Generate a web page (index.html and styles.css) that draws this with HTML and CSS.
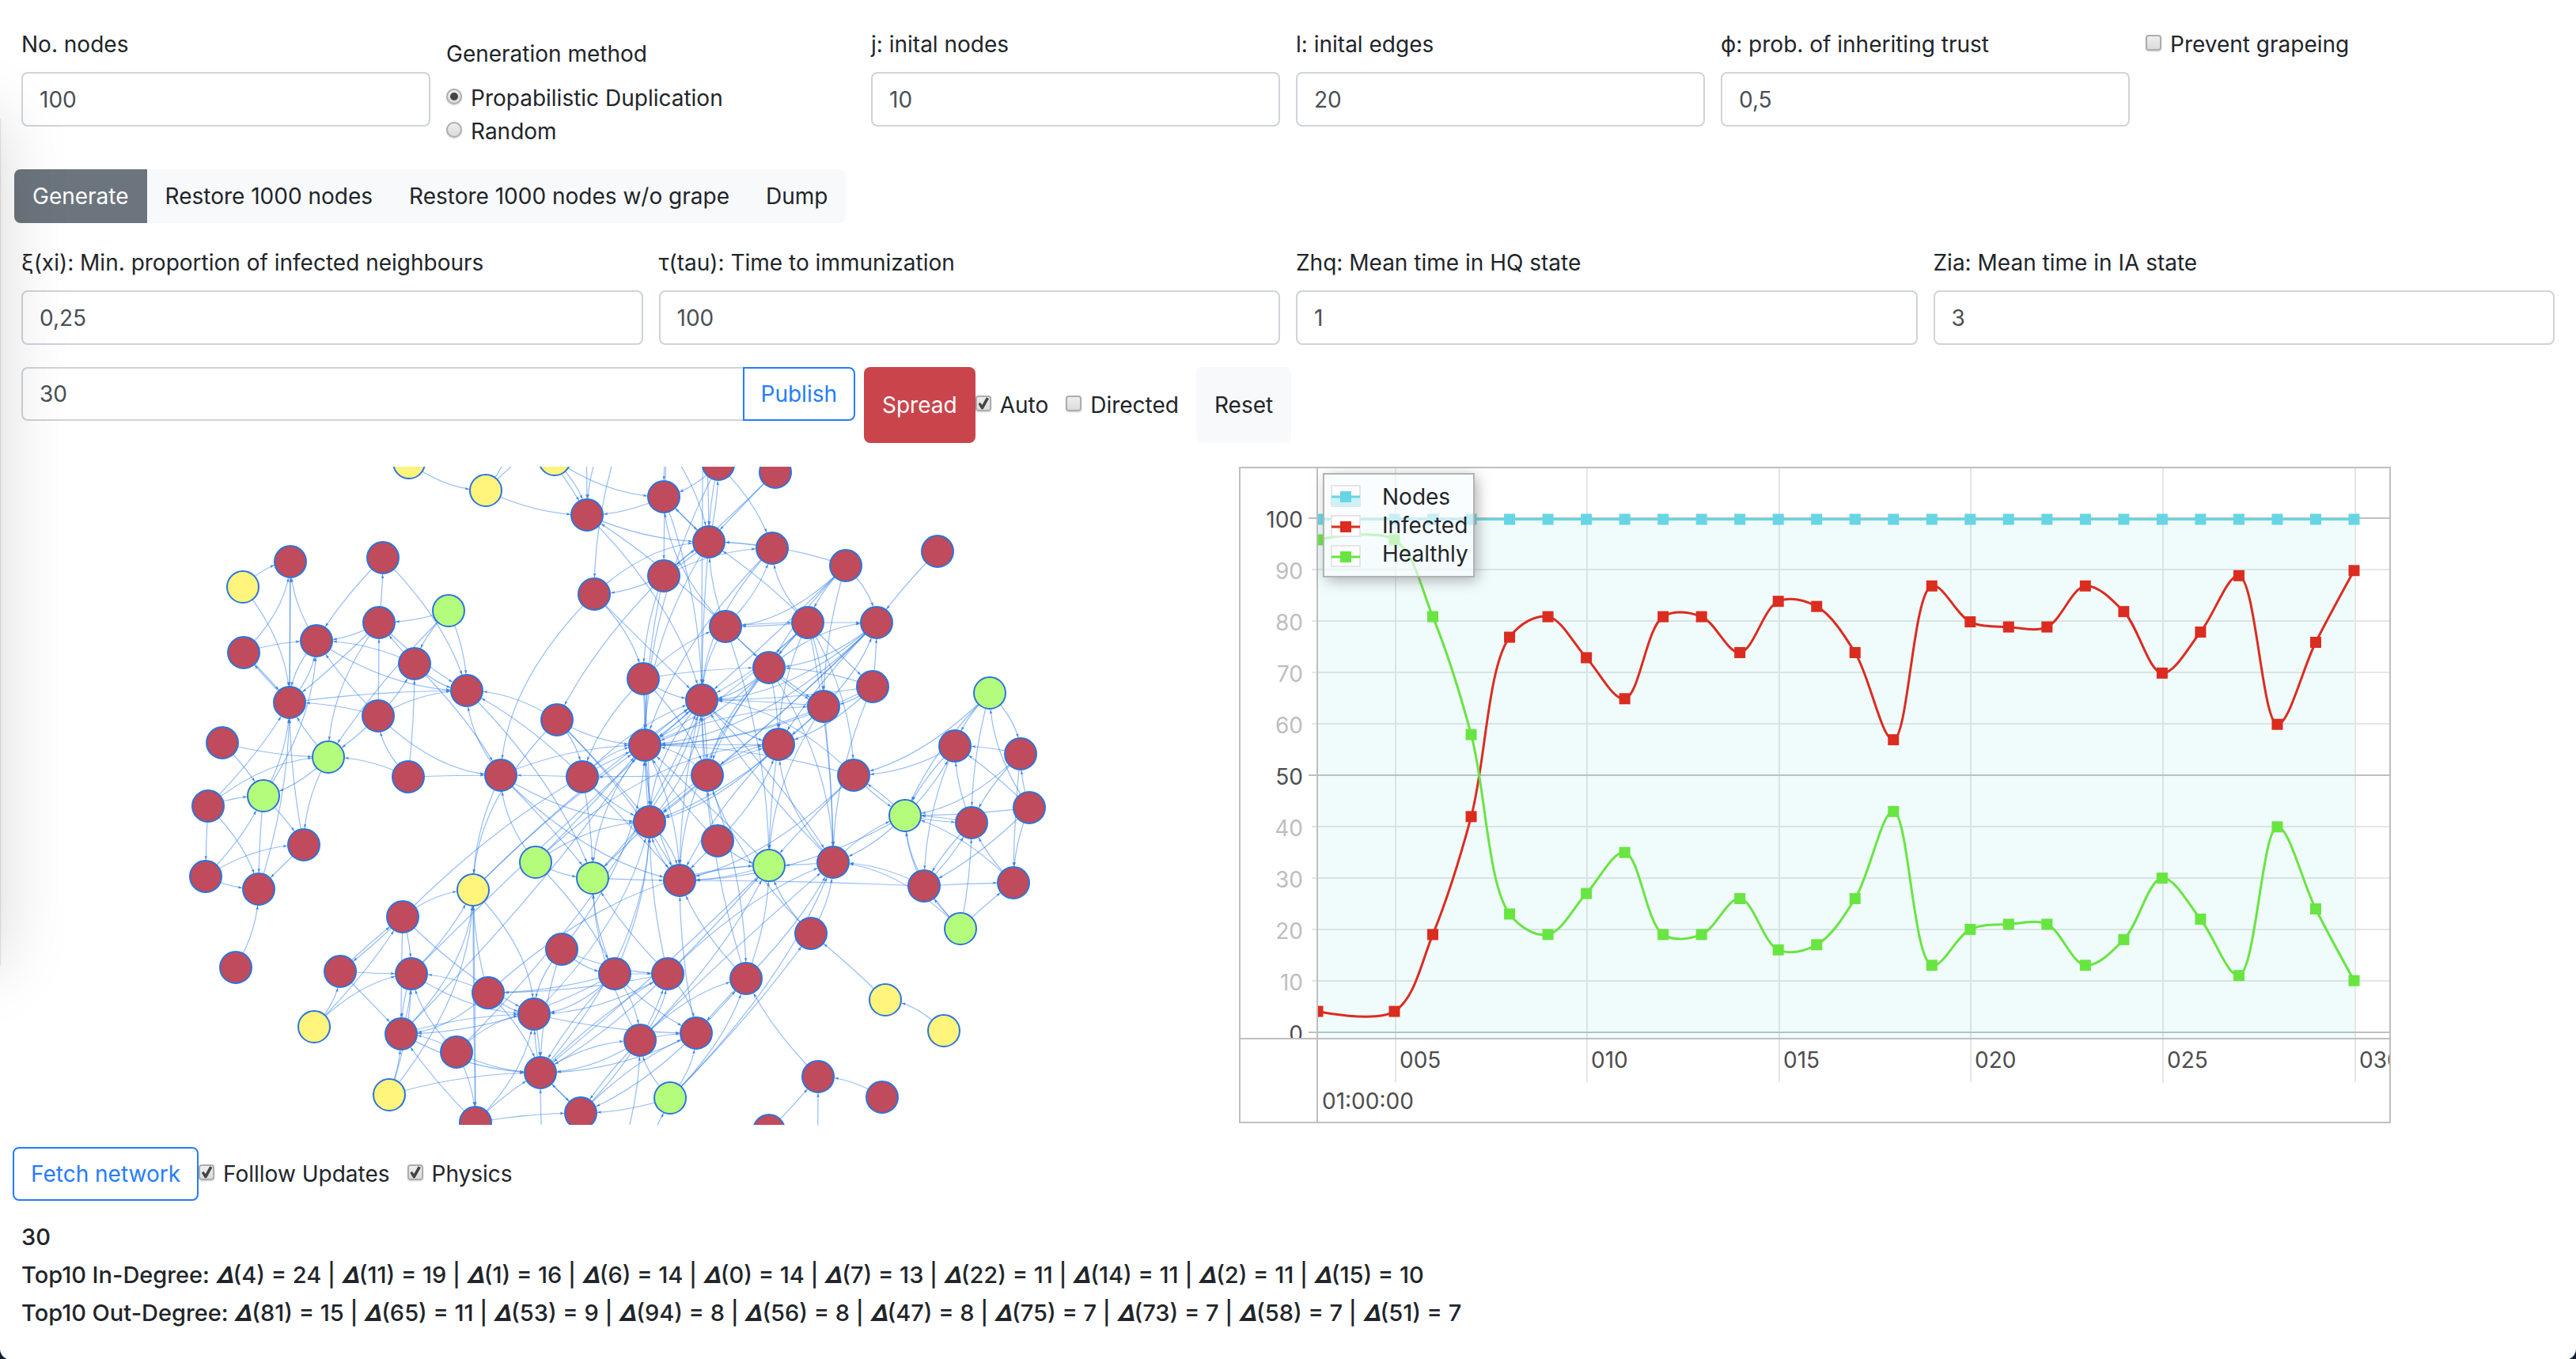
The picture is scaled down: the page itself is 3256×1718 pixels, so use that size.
FILE: index.html
```html
<!DOCTYPE html>
<html lang="en">
<head>
<meta charset="utf-8">
<meta name="viewport" content="width=device-width, initial-scale=1">
<title>Trust network</title>
<link rel="stylesheet" href="styles.css">
</head>
<body>
<main class="window">
  <form class="form-grid six" onsubmit="return false">
    <div class="field">
      <label for="nodes">No. nodes</label>
      <input class="control" id="nodes" type="text" value="100">
    </div>
    <fieldset class="methods">
      <legend>Generation method</legend>
      <label class="choice"><input type="radio" name="method" checked> Propabilistic Duplication</label>
      <label class="choice"><input type="radio" name="method"> Random</label>
    </fieldset>
    <div class="field">
      <label for="j">j: inital nodes</label>
      <input class="control" id="j" type="text" value="10">
    </div>
    <div class="field">
      <label for="l">l: inital edges</label>
      <input class="control" id="l" type="text" value="20">
    </div>
    <div class="field">
      <label for="phi">ϕ: prob. of inheriting trust</label>
      <input class="control" id="phi" type="text" value="0,5">
    </div>
    <div class="field">
      <label class="choice"><input type="checkbox"> Prevent grapeing</label>
    </div>
  </form>

  <div class="btn-group">
    <button class="btn btn-secondary" type="button">Generate</button>
    <button class="btn btn-light" type="button">Restore 1000 nodes</button>
    <button class="btn btn-light" type="button">Restore 1000 nodes w/o grape</button>
    <button class="btn btn-light" type="button">Dump</button>
  </div>

  <form class="form-grid four" onsubmit="return false">
    <div class="field">
      <label for="xi">ξ(xi): Min. proportion of infected neighbours</label>
      <input class="control" id="xi" type="text" value="0,25">
    </div>
    <div class="field">
      <label for="tau">τ(tau): Time to immunization</label>
      <input class="control" id="tau" type="text" value="100">
    </div>
    <div class="field">
      <label for="zhq">Zhq: Mean time in HQ state</label>
      <input class="control" id="zhq" type="text" value="1">
    </div>
    <div class="field">
      <label for="zia">Zia: Mean time in IA state</label>
      <input class="control" id="zia" type="text" value="3">
    </div>
  </form>

  <div class="actions">
    <div class="publish">
      <input class="control" type="text" value="30" aria-label="Message">
      <button class="btn btn-outline" type="button">Publish</button>
    </div>
    <div class="spread">
      <button class="btn btn-danger" type="button">Spread</button>
      <label class="choice"><input type="checkbox" checked> Auto</label>
      <label class="choice"><input type="checkbox"> Directed</label>
      <button class="btn btn-light" type="button">Reset</button>
    </div>
  </div>

  <section class="views">
    <svg id="network" class="view" viewBox="0 590 1566 832" role="img" aria-label="Network"></svg>
    <svg id="chart" class="view" viewBox="1566 590 1456 832" role="img" aria-label="Infection history"></svg>
  </section>

  <div class="network-tools">
    <button class="btn btn-outline" type="button">Fetch network</button>
    <label class="choice"><input type="checkbox" checked> Folllow Updates</label>
    <label class="choice"><input type="checkbox" checked> Physics</label>
  </div>

  <section class="stats">
    <h6>30</h6>
    <h6>Top10 In-Degree: 𝜟(4) = 24 | 𝜟(11) = 19 | 𝜟(1) = 16 | 𝜟(6) = 14 | 𝜟(0) = 14 | 𝜟(7) = 13 | 𝜟(22) = 11 | 𝜟(14) = 11 | 𝜟(2) = 11 | 𝜟(15) = 10</h6>
    <h6>Top10 Out-Degree: 𝜟(81) = 15 | 𝜟(65) = 11 | 𝜟(53) = 9 | 𝜟(94) = 8 | 𝜟(56) = 8 | 𝜟(47) = 8 | 𝜟(75) = 7 | 𝜟(73) = 7 | 𝜟(58) = 7 | 𝜟(51) = 7</h6>
  </section>
</main>
<script src="script.js"></script>
</body>
</html>
```
FILE: styles.css
```css
*,
*::before,
*::after {
  box-sizing: border-box;
}

html {
  background: #12202f;
}

body {
  margin: 0;
  color: #212529;
  font-family: Inter, "Liberation Sans", sans-serif;
  font-size: 28px;
  line-height: 42px;
}

.window {
  position: relative;
  min-height: 100vh;
  padding: 35px 0 28px;
  overflow: hidden;
  background: #fff;
  border-radius: 0 0 14px 14px;
}

/* Shadow cast by the neighbouring window */
.window::after {
  content: "";
  position: absolute;
  top: 150px;
  left: -200px;
  width: 200px;
  height: 1070px;
  box-shadow: 0 0 2px rgba(0, 0, 0, 0.3), 0 0 90px rgba(0, 0, 0, 0.16);
  pointer-events: none;
}

input,
button {
  margin: 0;
  font: inherit;
}

.form-grid {
  display: grid;
  gap: 20px;
  align-items: start;
  padding: 0 27px;
}

.six {
  grid-template-columns: repeat(6, minmax(0, 1fr));
}

.four {
  grid-template-columns: repeat(4, minmax(0, 1fr));
}

.field {
  display: flex;
  flex-direction: column;
  gap: 14px;
}

.control {
  width: 100%;
  height: 69px;
  padding: 0 21px;
  color: #495057;
  background: #fff;
  border: 2px solid #ced4da;
  border-radius: 8px;
}

.methods {
  min-width: 0;
  margin: 0;
  padding: 12px 0 0;
  border: 0;
}

.methods legend {
  float: left;
  width: 100%;
  margin-bottom: 14px;
  padding: 0;
}

.methods .choice {
  clear: both;
}

.choice {
  display: flex;
  align-items: center;
  gap: 11px;
}

.choice input {
  position: relative;
  flex: none;
  width: 20px;
  height: 20px;
  margin-bottom: 4px;
  appearance: none;
  background: linear-gradient(#eee, #dcdcdc);
  border: 2px solid #adadad;
  border-radius: 4px;
  box-shadow: 0 1px 2px rgba(0, 0, 0, 0.2);
}

.choice input[type="radio"] {
  border-radius: 50%;
}

.choice input:checked::before {
  content: "";
  position: absolute;
  inset: 0;
  background: #444;
  clip-path: polygon(12% 54%, 26% 42%, 42% 62%, 76% 2%, 96% 12%, 50% 96%, 36% 96%);
}

.choice input[type="radio"]:checked::before {
  inset: 3px;
  border-radius: 50%;
  clip-path: none;
}

.btn {
  padding: 11px 21px;
  color: #212529;
  white-space: nowrap;
  background: transparent;
  border: 2px solid transparent;
  border-radius: 8px;
}

.btn-group {
  display: flex;
  margin: 27px 18px 29px;
}

.btn-group .btn {
  border-radius: 0;
}

.btn-group .btn:first-child {
  border-radius: 8px 0 0 8px;
}

.btn-group .btn:last-child {
  border-radius: 0 8px 8px 0;
}

.btn-group .btn-secondary,
.btn-danger {
  color: #fff;
}

.btn-secondary {
  background: #6c757d;
}

.btn-light {
  background: #f8f9fa;
}

.btn-danger {
  background: #ca444b;
}

.btn-outline {
  color: #257cff;
  border-color: #257cff;
}

.actions {
  display: grid;
  grid-template-columns: repeat(3, minmax(0, 1fr));
  gap: 20px;
  align-items: start;
  padding: 28px 27px 30px;
}

.publish {
  display: flex;
}

.publish .control {
  flex: 1;
  height: 68px;
  border-right: 0;
  border-radius: 8px 0 0 8px;
}

.publish .btn {
  border-radius: 0 8px 8px 0;
}

.spread {
  display: flex;
  grid-column: span 2;
  align-items: stretch;
  height: 96px;
  margin-left: -9px;
}

.spread .choice {
  margin-right: 22px;
}

.views {
  display: grid;
  grid-template-columns: 1566fr 1456fr;
  padding-right: 234px;
}

.view {
  display: block;
  width: 100%;
}

.network-tools {
  display: flex;
  align-items: center;
  gap: 0 22px;
  margin: 28px 16px 29px;
}

.network-tools .btn {
  margin-right: -22px;
}

.stats {
  padding: 0 27px;
}

.stats h6 {
  margin: 0 0 14px;
  font-size: 29px;
  font-weight: 500;
  line-height: 34px;
}

/* Network graph */
.edge {
  fill: none;
  stroke: #2b7ce9;
  stroke-opacity: 0.5;
  stroke-width: 1.2;
}

.arrow {
  fill: #3d83e6;
}

.node {
  stroke: #2b74df;
  stroke-width: 2;
}

.node-r {
  fill: #bf4b5c;
}

.node-g {
  fill: #b4fc7c;
}

.node-y {
  fill: #fff47c;
}

/* History chart */
.frame,
.line-major {
  fill: none;
  stroke: #bfbfbf;
  stroke-width: 2;
}

.line-minor {
  stroke: #e5e5e5;
  stroke-width: 2;
}

.tick-major {
  fill: #4d4d4d;
  font-size: 28px;
}

.tick-minor {
  fill: #bebebe;
  font-size: 28px;
}

.series {
  fill: none;
  stroke-width: 3;
}

.series-nodes {
  stroke: #67d5e3;
}

.series-infected {
  stroke: #db2c20;
}

.series-healthy {
  stroke: #68e541;
}

.dot-nodes {
  fill: #67d5e3;
}

.dot-infected {
  fill: #db2c20;
}

.dot-healthy {
  fill: #68e541;
}

.area {
  fill: #67d5e3;
  fill-opacity: 0.1;
}

.legend-box {
  fill: #f8fcff;
  fill-opacity: 0.65;
  stroke: #b3b3b3;
  stroke-width: 2;
}

.legend-shadow {
  fill: #fff;
  filter: drop-shadow(4px 4px 9px rgba(120, 120, 120, 0.6));
}

.legend-icon {
  fill: #fff;
  stroke: #e5e5e5;
  stroke-width: 2;
}

.legend-area {
  fill: #cff1f5;
}

.legend-text {
  fill: #212529;
  font-size: 28px;
}
```
FILE: script.js
```js
const NS = 'http://www.w3.org/2000/svg';

function add(parent, name, attrs, text) {
  const el = document.createElementNS(NS, name);
  for (const key in attrs) el.setAttribute(key, attrs[key]);
  if (text !== undefined) el.textContent = text;
  parent.appendChild(el);
  return el;
}

/* ---------- Network ---------- */

// id: [x, y, state]; r = infected, g = healthy, y = quarantined
const nodes = {
  1: [517, 585, 'y'], 2: [614, 620, 'y'], 3: [701, 581, 'y'], 4: [742, 651, 'r'],
  5: [367, 710, 'r'], 6: [484, 705, 'r'], 7: [307, 742, 'y'], 8: [567, 772, 'g'],
  9: [479, 787, 'r'], 10: [400, 810, 'r'], 11: [308, 825, 'r'], 12: [524, 839, 'r'],
  13: [590, 873, 'r'], 14: [366, 888, 'r'], 15: [478, 905, 'r'], 16: [704, 910, 'r'],
  17: [281, 939, 'r'], 18: [415, 957, 'g'], 19: [516, 982, 'r'], 20: [633, 980, 'r'],
  21: [736, 982, 'r'], 22: [333, 1006, 'g'], 23: [263, 1019, 'r'], 24: [384, 1068, 'r'],
  25: [260, 1108, 'r'], 26: [327, 1124, 'r'], 27: [298, 1223, 'r'], 28: [509, 1159, 'r'],
  29: [598, 1125, 'y'], 30: [677, 1090, 'g'], 31: [749, 1110, 'g'], 32: [430, 1228, 'r'],
  33: [520, 1231, 'r'], 34: [397, 1298, 'y'], 35: [507, 1307, 'r'], 36: [617, 1255, 'r'],
  37: [710, 1200, 'r'], 38: [675, 1282, 'r'], 39: [577, 1330, 'r'], 40: [492, 1384, 'y'],
  41: [601, 1419, 'r'], 42: [683, 1356, 'r'], 43: [734, 1407, 'r'], 44: [839, 628, 'r'],
  45: [908, 587, 'r'], 46: [980, 597, 'r'], 47: [896, 685, 'r'], 48: [976, 693, 'r'],
  49: [1069, 715, 'r'], 50: [1185, 697, 'r'], 51: [839, 728, 'r'], 52: [751, 751, 'r'],
  53: [917, 792, 'r'], 54: [1021, 787, 'r'], 55: [1108, 787, 'r'], 56: [972, 844, 'r'],
  57: [813, 858, 'r'], 58: [1103, 868, 'r'], 59: [887, 885, 'r'], 60: [1041, 893, 'r'],
  61: [1251, 876, 'g'], 62: [815, 942, 'r'], 63: [984, 941, 'r'], 64: [894, 980, 'r'],
  65: [1079, 980, 'r'], 66: [1207, 943, 'r'], 67: [1290, 953, 'r'], 68: [1301, 1021, 'r'],
  69: [1144, 1031, 'g'], 70: [1228, 1040, 'r'], 71: [821, 1039, 'r'], 72: [907, 1063, 'r'],
  73: [972, 1094, 'g'], 74: [1053, 1090, 'r'], 75: [859, 1113, 'r'], 76: [1168, 1120, 'r'],
  77: [1281, 1116, 'r'], 78: [1214, 1174, 'g'], 79: [1025, 1180, 'r'], 80: [777, 1231, 'r'],
  81: [844, 1231, 'r'], 82: [943, 1237, 'r'], 83: [1119, 1264, 'y'], 84: [1193, 1303, 'y'],
  85: [809, 1315, 'r'], 86: [880, 1306, 'r'], 87: [847, 1388, 'g'], 88: [1034, 1361, 'r'],
  89: [1115, 1387, 'r'], 90: [972, 1429, 'r'], 91: [738, 480, 'r'], 92: [650, 530, 'r'],
  93: [790, 500, 'r'], 94: [846, 500, 'r'], 95: [800, 510, 'r'], 96: [889, 500, 'r'],
  97: [690, 1520, 'r'], 98: [1032, 1520, 'r'], 99: [770, 1500, 'r']
};

// source: targets
const links = {
  1: [2], 2: [4, 92, 93], 3: [4, 44], 4: [47, 59], 5: [14], 6: [10, 13], 7: [5, 14],
  8: [9, 12, 13, 18], 9: [6, 10, 14, 13, 18], 10: [5, 13, 14], 11: [5, 10, 14],
  12: [9, 10, 13, 20], 13: [31], 14: [5, 10, 11, 13], 15: [9, 10, 12, 13, 14, 18, 20],
  16: [13, 21, 62, 71, 75, 29], 17: [18, 22], 18: [14, 22, 24], 19: [12, 15, 18, 20],
  20: [13, 29, 31, 62, 71, 75], 21: [13, 20, 31, 59, 62, 71, 75], 22: [10, 14, 24, 26],
  23: [14, 18, 22, 25, 26], 24: [14, 26], 25: [22, 24, 26], 26: [14], 27: [26],
  28: [29, 32, 33, 35, 38, 62], 29: [38, 41, 59, 62], 30: [20, 31, 62, 63, 71, 80],
  31: [59, 75], 32: [28, 33, 35], 33: [29, 38, 59, 35], 34: [28, 32, 33],
  35: [29, 33, 38, 42, 62], 36: [29, 33, 35, 38, 42, 73], 37: [38, 42, 80, 81, 62],
  38: [42, 71, 86], 39: [33, 35, 38, 41, 42, 59], 40: [29, 33, 35, 42],
  41: [29, 35, 38, 42, 43], 42: [38, 43, 85, 71, 81], 43: [81, 86, 42], 44: [4, 47, 59],
  45: [44, 47, 48, 62], 46: [47, 51], 47: [44, 45, 52, 59, 62], 48: [47, 59, 62],
  49: [47, 53, 54, 55, 56, 59, 60], 50: [55], 51: [16, 48, 47, 57, 62],
  52: [20, 47, 59, 57], 53: [4, 44, 47, 48, 54, 56, 59, 60, 73],
  54: [47, 48, 53, 55, 56, 58, 59, 60, 62, 63, 65, 64, 74], 55: [59, 62, 63, 64, 56, 71],
  56: [55, 59, 60, 62, 63, 64, 74, 75], 57: [21, 53, 56, 59, 62, 64, 71],
  58: [55, 56, 59, 60, 62, 63, 74], 59: [62, 63, 64, 71, 74, 75], 60: [55, 59, 62, 63, 73, 74, 71],
  61: [65, 66, 67, 69, 70], 62: [59, 60, 71, 75, 31], 63: [62, 71, 73, 75],
  64: [21, 59, 62, 63, 71, 82], 65: [59, 62, 73, 75, 69], 66: [65, 69, 76],
  67: [66, 69, 70, 77], 68: [61, 66, 67, 69, 76, 77], 69: [65, 66, 70, 74, 75],
  70: [66, 69, 76], 71: [59, 62, 63, 75, 31], 72: [62, 64, 73, 75, 63], 73: [62, 75, 42],
  74: [59, 63, 69, 73], 75: [62, 71, 73], 76: [69, 70, 74, 75, 77], 77: [69, 70],
  78: [69, 70, 74, 76, 77], 79: [64, 73, 74], 80: [31, 35, 36, 38, 42, 71, 81, 85, 86],
  81: [31, 36, 38, 42, 71, 73, 74, 86], 82: [59, 73, 74, 75, 86],
  83: [79], 84: [83], 85: [31, 42, 43, 73, 74, 81, 82, 86], 86: [42, 82, 43, 75],
  87: [43, 74, 79, 82, 85, 86], 88: [82], 89: [88], 90: [88], 91: [4], 92: [4],
  93: [4, 47], 94: [44, 51], 95: [52], 96: [47, 59], 97: [42], 98: [88],
  99: [87, 85]
};

const RADIUS = 20;

// Control point lies on the diagonal leaving the source, held to the target on the short axis
function controlPoint(a, b) {
  const dx = Math.abs(b[0] - a[0]);
  const dy = Math.abs(b[1] - a[1]);
  const step = Math.max(dx, dy) / 2;
  return [
    a[0] + Math.sign(b[0] - a[0]) * Math.min(step, dx),
    a[1] + Math.sign(b[1] - a[1]) * Math.min(step, dy)
  ];
}

function pointAt(a, c, b, t) {
  const u = 1 - t;
  return [0, 1].map(i => u * u * a[i] + 2 * u * t * c[i] + t * t * b[i]);
}

function drawNetwork(svg) {
  const edges = add(svg, 'g', {});
  const dots = add(svg, 'g', {});
  for (const from in links) {
    for (const to of links[from]) {
      const a = nodes[from];
      const b = nodes[to];
      const c = controlPoint(a, b);
      add(edges, 'path', { class: 'edge', d: `M${a[0]} ${a[1]}Q${c[0]} ${c[1]} ${b[0]} ${b[1]}` });
      let t = 1;
      let p = pointAt(a, c, b, t);
      while (t > 0 && Math.hypot(p[0] - b[0], p[1] - b[1]) < RADIUS + 1) {
        t -= 0.002;
        p = pointAt(a, c, b, t);
      }
      const q = pointAt(a, c, b, t - 0.01);
      const angle = Math.atan2(p[1] - q[1], p[0] - q[0]) * 180 / Math.PI;
      add(edges, 'path', {
        class: 'arrow',
        d: 'M0 0L-5 -1.7L-4.2 0L-5 1.7Z',
        transform: `translate(${p[0].toFixed(1)} ${p[1].toFixed(1)}) rotate(${angle.toFixed(1)})`
      });
    }
  }
  for (const id in nodes) {
    const [x, y, state] = nodes[id];
    add(dots, 'circle', { class: `node node-${state}`, cx: x, cy: y, r: RADIUS });
  }
}

/* ---------- History chart ---------- */

const times = [3, 5, 6, 7, 8, 9, 10, 11, 12, 13, 14, 15, 16, 17, 18, 19, 20, 21, 22, 23, 24, 25, 26, 27, 28, 29, 30];
const infected = [4, 4, 19, 42, 77, 81, 73, 65, 81, 81, 74, 84, 83, 74, 57, 87, 80, 79, 79, 87, 82, 70, 78, 89, 60, 76, 90];

const LEFT = 1665, RIGHT = 3021, TOP = 591, BOTTOM = 1313, FLOOR = 1419;
const xOf = t => 1762.5 + (t - 5) * 48.52;
const yOf = v => 1304.5 - v * 6.48;

// Centripetal Catmull-Rom spline written as Bezier segments
function spline(pts) {
  let d = `M${pts[0]}`;
  for (let i = 0; i < pts.length - 1; i++) {
    const p0 = pts[i - 1] || pts[i], p1 = pts[i], p2 = pts[i + 1], p3 = pts[i + 2] || p2;
    const len = (a, b) => Math.hypot(a[0] - b[0], a[1] - b[1]);
    const d1 = len(p0, p1), d2 = len(p1, p2), d3 = len(p2, p3);
    const s1 = Math.sqrt(d1), s2 = Math.sqrt(d2), s3 = Math.sqrt(d3);
    const A = 2 * d1 + 3 * s1 * s2 + d2, N = 3 * s1 * (s1 + s2);
    const B = 2 * d3 + 3 * s3 * s2 + d2, M = 3 * s3 * (s3 + s2);
    const c1 = N ? [0, 1].map(k => (-d2 * p0[k] + A * p1[k] + d1 * p2[k]) / N) : p1;
    const c2 = M ? [0, 1].map(k => (d3 * p1[k] + B * p2[k] - d2 * p3[k]) / M) : p2;
    d += `C${c1} ${c2} ${p2}`;
  }
  return d;
}

function drawChart(svg) {
  const defs = add(svg, 'defs', {});
  const plotClip = add(defs, 'clipPath', { id: 'plot' });
  add(plotClip, 'rect', { x: LEFT, y: TOP, width: RIGHT - LEFT, height: BOTTOM - TOP });
  const axisClip = add(defs, 'clipPath', { id: 'axis' });
  add(axisClip, 'rect', { x: 1567, y: TOP, width: 98, height: BOTTOM - TOP });
  const timeClip = add(defs, 'clipPath', { id: 'time' });
  add(timeClip, 'rect', { x: LEFT, y: BOTTOM, width: RIGHT - LEFT, height: FLOOR - BOTTOM });
  // Everything except the legend box, so its shadow does not tint the translucent fill
  const outsideClip = add(defs, 'clipPath', { id: 'outside' });
  add(outsideClip, 'path', { 'clip-rule': 'evenodd', d: 'M1600 590H1950V800H1600ZM1673 599H1863V729H1673Z' });

  const timeAxis = add(svg, 'g', { 'clip-path': 'url(#time)' });
  for (let t = 5; t <= 30; t += 5) {
    const x = Math.round(xOf(t)) + 1;
    add(svg, 'line', { class: 'line-minor', x1: x, x2: x, y1: TOP, y2: 1368 });
    add(timeAxis, 'text', { class: 'tick-major', x: x + 5, y: 1350 }, String(t).padStart(3, '0'));
  }
  add(timeAxis, 'text', { class: 'tick-major', x: 1671, y: 1402 }, '01:00:00');

  const valueAxis = add(svg, 'g', { 'clip-path': 'url(#axis)' });
  for (let v = 0; v <= 100; v += 10) {
    const major = v % 50 === 0;
    const y = Math.round(1305 - v * 6.5);
    add(svg, 'line', {
      class: major ? 'line-major' : 'line-minor',
      x1: major ? 1654 : 1658, x2: RIGHT, y1: y, y2: y
    });
    add(valueAxis, 'text', {
      class: major ? 'tick-major' : 'tick-minor',
      x: 1647, y: y + 12, 'text-anchor': 'end'
    }, v);
  }

  const plot = add(svg, 'g', { 'clip-path': 'url(#plot)' });
  add(plot, 'rect', { class: 'area', x: LEFT, y: yOf(100), width: xOf(30) - LEFT, height: BOTTOM - yOf(100) });
  const series = {
    nodes: times.map(t => [xOf(t), yOf(100)]),
    infected: times.map((t, i) => [xOf(t), yOf(infected[i])]),
    healthy: times.map((t, i) => [xOf(t), yOf(100 - infected[i])])
  };
  for (const name in series) {
    add(plot, 'path', { class: `series series-${name}`, d: spline(series[name]) });
    for (const [x, y] of series[name]) {
      add(plot, 'rect', { class: `dot-${name}`, x: x - 7, y: y - 7, width: 14, height: 14 });
    }
  }

  add(svg, 'rect', { class: 'frame', x: 1567, y: TOP, width: RIGHT - 1567, height: FLOOR - TOP });
  add(svg, 'line', { class: 'line-major', x1: LEFT, x2: LEFT, y1: TOP, y2: FLOOR });
  add(svg, 'line', { class: 'line-major', x1: 1567, x2: RIGHT, y1: BOTTOM, y2: BOTTOM });

  const legend = add(svg, 'g', {});
  const outside = add(legend, 'g', { 'clip-path': 'url(#outside)' });
  add(outside, 'rect', { class: 'legend-shadow', x: 1673, y: 599, width: 190, height: 130 });
  add(legend, 'rect', { class: 'legend-box', x: 1673, y: 599, width: 190, height: 130 });
  [['nodes', 'Nodes'], ['infected', 'Infected'], ['healthy', 'Healthly']].forEach(([name, title], i) => {
    const y = 614 + i * 38;
    add(legend, 'rect', { class: 'legend-icon', x: 1683, y: y, width: 36, height: 26 });
    if (name === 'nodes') add(legend, 'rect', { class: 'legend-area', x: 1683, y: y + 14, width: 36, height: 12 });
    add(legend, 'line', { class: `series series-${name}`, x1: 1683, x2: 1719, y1: y + 14, y2: y + 14 });
    add(legend, 'rect', { class: `dot-${name}`, x: 1694, y: y + 7, width: 14, height: 14 });
    add(legend, 'text', { class: 'legend-text', x: 1747, y: 638 + i * 36 }, title);
  });
}

drawNetwork(document.getElementById('network'));
drawChart(document.getElementById('chart'));
```
